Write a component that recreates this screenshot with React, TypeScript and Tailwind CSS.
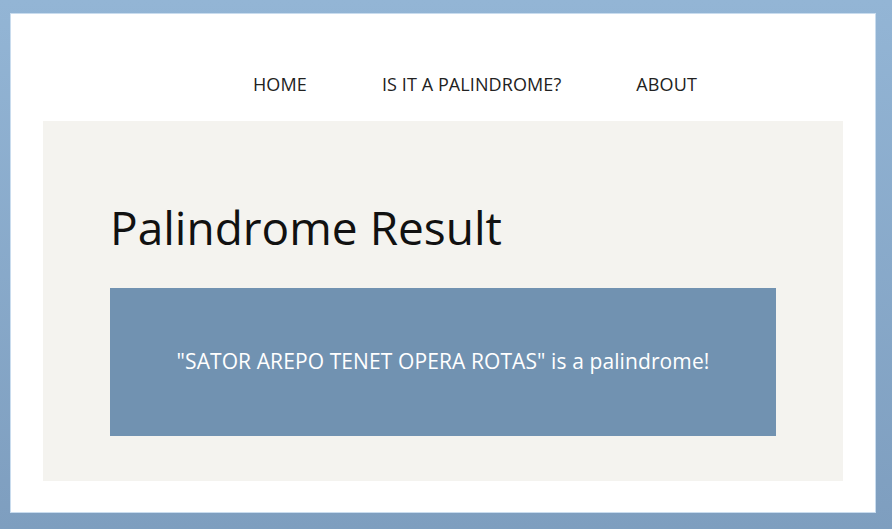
import React from "react";

export default function App() {
  return (
    <div
      className="w-[892px] h-[529px] bg-gradient-to-b from-[#93b5d5] to-[#7e9ebf] pt-[14px] pl-[11px] pr-[17px] pb-[17px]"
      style={{ fontFamily: '"Open Sans", "Liberation Sans", sans-serif' }}
    >
      <div className="w-full h-full bg-white flex flex-col px-[32px] pb-[31px] shadow-[0_0_0_1px_#c9dcee]">
        <nav className="h-[107px] flex items-start pl-[210px] pt-[60px]">
          <div className="flex items-center gap-[75px] text-[18px] text-[#222] leading-[20px] tracking-[0.1px]">
            <span>HOME</span>
            <span>IS IT A PALINDROME?</span>
            <span>ABOUT</span>
          </div>
        </nav>
        <main className="flex-1 bg-[#f4f3ef] pt-[80px] px-[67px] pb-[45px] flex flex-col">
          <h1 className="text-[46px] leading-[53px] text-[#111] font-normal">Palindrome Result</h1>
          <div className="mt-[34px] h-[148px] bg-[#7192b1] flex items-center justify-center text-white text-[21px] tracking-[0.1px]">
            "SATOR AREPO TENET OPERA ROTAS" is a palindrome!
          </div>
        </main>
      </div>
    </div>
  );
}
